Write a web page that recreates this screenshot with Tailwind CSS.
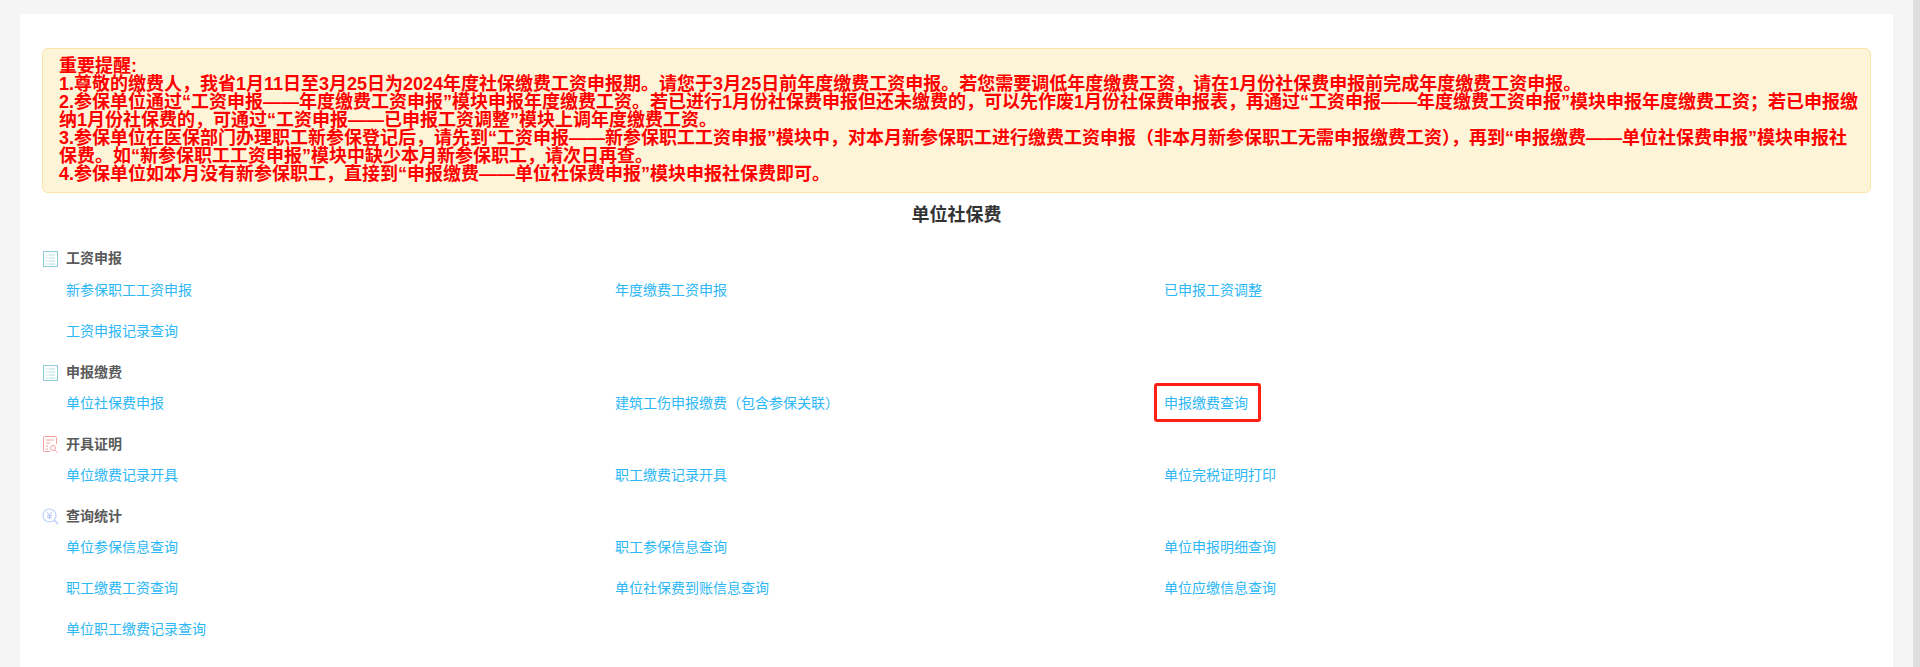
<!DOCTYPE html>
<html lang="zh-CN">
<head>
<meta charset="utf-8">
<script src="https://cdn.jsdelivr.net/npm/@tailwindcss/browser@4"></script>
<title>单位社保费</title>
</head>
<body class="h-[667px] overflow-hidden bg-[#f5f5f5] font-['Liberation_Sans','Noto_Sans_CJK_SC',sans-serif]">
<div class="flex h-[667px]">
  <main class="relative ml-5 mt-[14px] h-[653px] w-[1873px] shrink-0 bg-white px-[22px] pt-[34px]">
    <div class="h-[145px] rounded-md border border-[#fae5a5] bg-[#fef5d8] pl-4 pr-2 pt-[8px] text-[18px] leading-[18px] font-bold text-[#ff0000]">
      <p>重要提醒:</p>
      <p>1.尊敬的缴费人，我省1月11日至3月25日为2024年度社保缴费工资申报期。请您于3月25日前年度缴费工资申报。若您需要调低年度缴费工资，请在1月份社保费申报前完成年度缴费工资申报。</p>
      <p>2.参保单位通过“工资申报——年度缴费工资申报”模块申报年度缴费工资。若已进行1月份社保费申报但还未缴费的，可以先作废1月份社保费申报表，再通过“工资申报——年度缴费工资申报”模块申报年度缴费工资；若已申报缴纳1月份社保费的，可通过“工资申报——已申报工资调整”模块上调年度缴费工资。</p>
      <p>3.参保单位在医保部门办理职工新参保登记后，请先到“工资申报——新参保职工工资申报”模块中，对本月新参保职工进行缴费工资申报（非本月新参保职工无需申报缴费工资），再到“申报缴费——单位社保费申报”模块申报社保费。如“新参保职工工资申报”模块中缺少本月新参保职工，请次日再查。</p>
      <p>4.参保单位如本月没有新参保职工，直接到“申报缴费——单位社保费申报”模块申报社保费即可。</p>
    </div>
    <h1 class="mt-[6px] h-[32px] text-center text-[18px] leading-[32px] font-bold text-[#333]">单位社保费</h1>
    <div class="pt-[12px]">
      <section>
        <h2 class="flex h-[31px] items-center text-[14px] font-bold text-[#5a5a5a]">
          <svg class="ml-px mr-[8px] mt-px h-[16px] w-[15px]" viewBox="0 0 15 16" fill="none"><rect x=".5" y=".5" width="14" height="15" fill="#fff" stroke="#8fcdd8"/><path d="M3 4h1.5M3 7h1.5M3 10h1.5M3 13h1.5M5.5 4h6.5M5.5 7h6.5M5.5 10h6.5M5.5 13h6.5" stroke="#b4dde2"/></svg>工资申报
        </h2>
        <div class="grid grid-cols-[549px_549px_549px] pl-[24px] text-[14px] text-[#2db7f5]">
          <a class="mb-[9px] h-[32px] leading-[32px]">新参保职工工资申报</a><a class="h-[32px] leading-[32px]">年度缴费工资申报</a><a class="h-[32px] leading-[32px]">已申报工资调整</a>
          <a class="mb-[9px] h-[32px] leading-[32px]">工资申报记录查询</a>
        </div>
      </section>
      <section>
        <h2 class="flex h-[31px] items-center pt-[2px] text-[14px] font-bold text-[#5a5a5a]">
          <svg class="ml-px mr-[8px] h-[16px] w-[15px]" viewBox="0 0 15 16" fill="none"><rect x=".5" y=".5" width="14" height="15" fill="#fff" stroke="#8fcdd8"/><path d="M3 4h1.5M3 7h1.5M3 10h1.5M3 13h1.5M5.5 4h6.5M5.5 7h6.5M5.5 10h6.5M5.5 13h6.5" stroke="#b4dde2"/></svg>申报缴费
        </h2>
        <div class="grid grid-cols-[549px_549px_549px] pl-[24px] text-[14px] text-[#2db7f5]">
          <a class="mb-[9px] h-[32px] leading-[32px]">单位社保费申报</a><a class="h-[32px] leading-[32px]">建筑工伤申报缴费（包含参保关联）</a><a class="h-[32px] leading-[32px]">申报缴费查询</a>
        </div>
      </section>
      <section>
        <h2 class="flex h-[31px] items-center pt-[2px] text-[14px] font-bold text-[#5a5a5a]">
          <svg class="ml-px mr-[8px] h-[17px] w-[15px]" viewBox="0 0 15 17" fill="none"><path d="M13.5 8V1.5a1 1 0 0 0-1-1H1.5a1 1 0 0 0-1 1v13a1 1 0 0 0 1 1H7" stroke="#f7a1a1"/><path d="M3 4h8M3 7h4M3 10h2M3 13h2" stroke="#f7a1a1"/><circle cx="10" cy="12" r="2.5" stroke="#f7a1a1"/><path d="M12 14l2.5 2.5" stroke="#f7a1a1"/></svg>开具证明
        </h2>
        <div class="grid grid-cols-[549px_549px_549px] pl-[24px] text-[14px] text-[#2db7f5]">
          <a class="mb-[9px] h-[32px] leading-[32px]">单位缴费记录开具</a><a class="h-[32px] leading-[32px]">职工缴费记录开具</a><a class="h-[32px] leading-[32px]">单位完税证明打印</a>
        </div>
      </section>
      <section>
        <h2 class="flex h-[31px] items-center pt-[2px] text-[14px] font-bold text-[#5a5a5a]">
          <svg class="mr-[7px] h-[17px] w-[17px]" viewBox="0 0 17 17" fill="none"><circle cx="7.5" cy="7.5" r="6.5" stroke="#bcd0fb" stroke-width="1.2"/><path d="M12.3 12.3l3.7 3.7" stroke="#bcd0fb" stroke-width="1.6"/><path d="M5.3 4.2l2.2 3 2.2-3M5 7.6h5M5 9.7h5M7.5 7.4v4" stroke="#a9c0f5" stroke-width=".9"/></svg>查询统计
        </h2>
        <div class="grid grid-cols-[549px_549px_549px] pl-[24px] text-[14px] text-[#2db7f5]">
          <a class="mb-[9px] h-[32px] leading-[32px]">单位参保信息查询</a><a class="h-[32px] leading-[32px]">职工参保信息查询</a><a class="h-[32px] leading-[32px]">单位申报明细查询</a>
          <a class="mb-[9px] h-[32px] leading-[32px]">职工缴费工资查询</a><a class="h-[32px] leading-[32px]">单位社保费到账信息查询</a><a class="h-[32px] leading-[32px]">单位应缴信息查询</a>
          <a class="h-[32px] leading-[32px]">单位职工缴费记录查询</a>
        </div>
      </section>
    </div>
    <div class="absolute left-[1134px] top-[369px] h-[39px] w-[107px] rounded-[3px] border-[3px] border-[#ff2015]"></div>
  </main>
  <div class="ml-auto h-[667px] w-[7px] bg-[#dedede]"></div>
</div>
</body>
</html>
